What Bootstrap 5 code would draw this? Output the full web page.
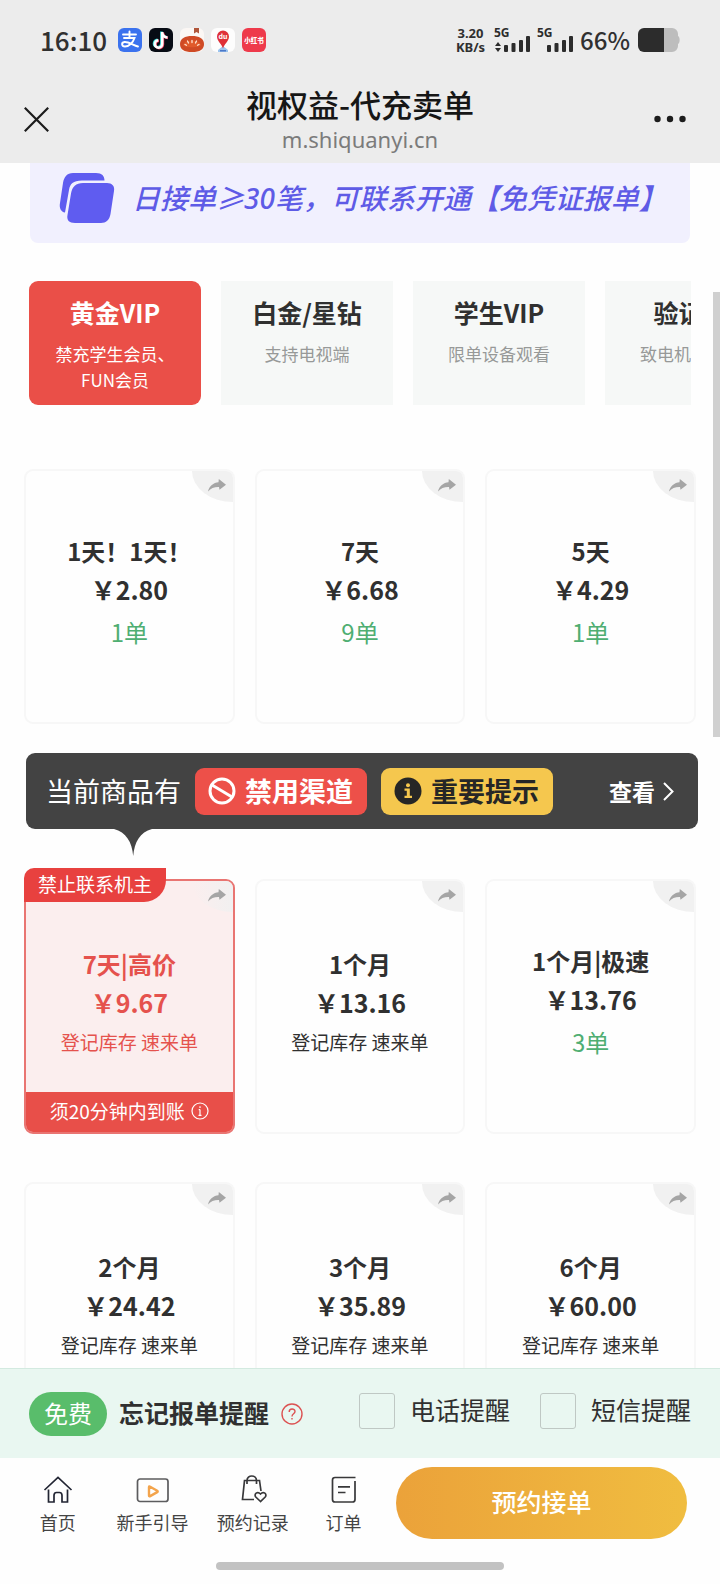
<!DOCTYPE html>
<html lang="zh-CN">
<head>
<meta charset="utf-8">
<meta name="viewport" content="width=device-width, initial-scale=1">
<title>视权益-代充卖单</title>
<link href="https://cdn.jsdelivr.net/npm/bootstrap@5.3.0/dist/css/bootstrap.min.css" rel="stylesheet">
<style>
  :root { --ink: #303030; --brand-red: #ea4f48; --ok: #4fae72; }
  body { font-family: "Noto Sans CJK SC", sans-serif; color: var(--ink); background: #fefefe; }
  button { color: inherit; }
  a { color: inherit; text-decoration: none; }
  svg { flex: none; display: block; }

  .topbar { background: #ececec; }
  .status { height: 80px; padding: 0 40px; }
  .clock { font-size: 26px; font-weight: 500; line-height: 32px; }
  .apps { gap: 7px; margin-left: 11px; }
  .speed { font-family: "Noto Sans", sans-serif; font-size: 13px; font-weight: 700; line-height: 14px; }
  .net { font-family: "Noto Sans", sans-serif; }
  .charge { font-size: 24px; font-weight: 500; line-height: 32px; margin-left: 5px; }
  .titlebar { height: 83px; padding: 0 24px 5px; }
  .page-name { font-size: 31px; font-weight: 500; line-height: 40px; color: #161616; }
  .page-host { font-family: "Noto Sans", sans-serif; font-size: 22px; line-height: 30px; color: #7b7b7b; }

  .feed { overflow-y: auto; overflow-x: hidden; scrollbar-width: none; min-height: 0; }
  .feed::-webkit-scrollbar { display: none; }
  .thumb { position: absolute; right: 0; top: 129px; width: 7px; height: 445px; background: #d0d0d0; }

  .promo { height: 80px; margin: 0 30px; padding: 0 28px 11px; gap: 17px; background: #f1f0fe; border-radius: 0 0 8px 8px; }
  .promo-text { font-family: "Noto Sans", "Noto Sans CJK SC", sans-serif; font-size: 28px; font-weight: 500; font-style: italic; line-height: 36px; color: #5e5be6; white-space: nowrap; }

  .kinds { margin: 38px 29px 0; gap: 20px; overflow: hidden; }
  .kind { flex: 0 0 172px; height: 124px; padding: 12px 24px 0; border: 0; background: #f6f8f7; }
  .kind-name { font-size: 25px; font-weight: 700; line-height: 38px; white-space: nowrap; }
  .kind-note { font-size: 17px; line-height: 26px; color: #979998; margin-top: 10px; }
  .kind.active { background: var(--brand-red); border-radius: 9px; color: #fff; }
  .kind.active .kind-note { color: #fff; }

  .goods { display: grid; grid-template-columns: repeat(3, 1fr); gap: 20px; padding: 0 24px; }
  .good { position: relative; height: 255px; padding-bottom: 9px; border: 2px solid #f7f7f7; border-radius: 9px; background: #fefefe; }
  .good-name { font-size: 24px; font-weight: 700; line-height: 39px; }
  .good-price { font-size: 25px; font-weight: 700; line-height: 39px; }
  .good-count { font-size: 24px; line-height: 45px; color: var(--ok); }
  .good-stock { font-size: 19px; line-height: 39px; }
  .share { position: absolute; top: 0; right: 0; width: 41px; height: 31px; padding: 8px 7px 0 16px; border: 0; background: #f1f1f1; border-radius: 0 7px 0 41px / 0 7px 0 31px; }
  .good.picked { border-color: #e97572; background: #fbeeee; color: #e5524d; }
  .picked .share { background: linear-gradient(90deg, #fbeeee, #f1f0f0); }
  .tag { position: absolute; left: -2px; top: -13px; height: 34px; padding: 0 14px; font-size: 19px; line-height: 32px; color: #fff; background: #e8413f; border-radius: 10px 0 22px 0; }
  .limit { position: absolute; left: 0; right: 0; bottom: 0; height: 40px; padding-bottom: 2px; gap: 6px; font-size: 19px; color: #fff; background: #e84f49; border-radius: 0 0 7px 7px; }

  .notice { position: relative; height: 76px; margin: 29px 22px 50px 26px; padding: 0 24px 0 20px; background: #434343; border-radius: 9px; color: #fff; }
  .notice-lead { font-size: 27px; line-height: 40px; white-space: nowrap; }
  .chip { height: 47px; gap: 9px; padding: 0 14px 0 13px; border-radius: 9px; font-size: 27px; font-weight: 700; line-height: 40px; white-space: nowrap; margin-left: 14px; }
  .chip-red { background: #ed5049; }
  .chip-gold { background: #f5c74e; color: #262626; }
  .look { font-size: 23px; font-weight: 700; gap: 8px; }
  .notice-tip { position: absolute; left: 88px; top: 75px; }

  .remind { height: 90px; padding: 0 29px; background: #e9f7f1; border-top: 1px solid #d3eae0; }
  .free { height: 44px; padding: 0 15px; border-radius: 22px; font-size: 24px; line-height: 41px; color: #fff; background: #59bd6b; }
  .remind-name { font-size: 25px; font-weight: 700; line-height: 38px; margin-left: 12px; padding-bottom: 4px; }
  .pick-row { gap: 30px; padding-bottom: 6px; }
  .pick { gap: 15px; font-size: 25px; line-height: 34px; white-space: nowrap; }
  .pick span { padding-bottom: 4px; }
  .pick input { appearance: none; width: 36px; height: 36px; margin: 0; border: 1px solid #bfc8c4; border-radius: 3px; background: transparent; }
  .pick input:checked { background: #59bd6b; }

  .tabs { height: 98px; padding: 9px 33px 0 11px; }
  .tab-list { display: grid; grid-template-columns: 94fr 96fr 105fr 77fr; }
  .tab-link { font-size: 18px; line-height: 26px; color: #444; gap: 2px; padding-top: 4px; white-space: nowrap; }
  .book { flex: 0 0 291px; height: 72px; margin-left: 14px; padding-bottom: 3px; border: 0; border-radius: 36px; font-size: 25px; font-weight: 500; color: #fff; background: linear-gradient(90deg, #eba23a, #f0bd40); }
  .home-pill { width: 40%; height: 8px; border-radius: 4px; background: #c2c2c2; margin: 6px auto 14px; }
</style>
</head>
<body>
<svg width="0" height="0" class="position-absolute" aria-hidden="true">
  <symbol id="share" viewBox="0 0 18 13"><path d="M0 12.500C1.200 7 5.500 3.700 10.500 3.300L10.800 0 18 5.800 11.500 10.800 11 8C6.500 7.800 3 9.200 0 12.500Z" fill="#a5a5a5"/></symbol>
</svg>

<div class="vh-100 d-flex flex-column">
  <header class="topbar">
    <div class="status d-flex align-items-center">
      <span class="clock">16:10</span>
      <div class="apps d-flex">
        <svg width="24" height="24" viewBox="0 0 24 24"><rect width="24" height="24" rx="6" fill="#3b72ee"/><g fill="none" stroke="#fff" stroke-width="1.900" stroke-linecap="round"><path d="M5 6.500H18M11.500 3.500V10M6 10H16.500C15 14.500 11 18.500 7 18.500 3.500 18.500 3 14.500 6.500 14 10 13.500 15 17 20 18.500"/></g></svg>
        <svg width="24" height="24" viewBox="0 0 24 24"><rect width="24" height="24" rx="6" fill="#070b14"/><g fill="none" stroke-width="2.600"><path d="M12.400 3.500V15.500A3.700 3.700 0 1 1 8.500 11.800M12.400 4.500C13 7.500 15 9 18 9.200" stroke="#35d6d6"/><path d="M13.900 4.500V16.500A3.700 3.700 0 1 1 10 12.800M14 5.500C14.500 8 16.500 9.700 19 9.900" stroke="#ee3a5c"/><path d="M13.200 4V16A3.700 3.700 0 1 1 9.300 12.300M13.200 5C13.800 7.800 15.700 9.300 18.500 9.500" stroke="#fff"/></g></svg>
        <svg width="24" height="24" viewBox="0 0 24 24"><rect width="24" height="24" rx="6" fill="#fbf7f4"/><path d="M14 0h5v5.500l-2.500-1.500L14 5.500Z" fill="#b0563a"/><path d="M0 16C0 10.500 5 8 12 8s12 2.500 12 8-4 8-12 8S0 21.500 0 16Z" fill="#cf4a25"/><path d="M3 17c2-3.500 5-4.500 9-4.500s7 1 9 4.500c-2 3-16 3-18 0Z" fill="#e05a2b"/><g stroke="#ffe9d8" stroke-width="1.300" stroke-linecap="round"><path d="M12 12.500v2M7.500 13l1 2M16.500 13l-1 2M5 16.500l1.500.8M19 16.500l-1.500.8"/></g></svg>
        <svg width="24" height="24" viewBox="0 0 24 24"><rect width="24" height="24" rx="6" fill="#fdfdfd"/><path d="M7 22l5-4 5 4v2H7Z" fill="#9cc4ef"/><path d="M9 22h6v1.500H9Z" fill="#4c79c8"/><path d="M12 20.500C11 16 6 13.500 6 8.500a6 6 0 0 1 12 0c0 5-5 7.500-6 12Z" fill="#df3038"/><text x="12" y="11" text-anchor="middle" font-size="7" font-weight="700" fill="#fff">du</text></svg>
        <svg width="24" height="24" viewBox="0 0 24 24"><rect width="24" height="24" rx="6" fill="#ee3a4b"/><text x="12" y="14.500" text-anchor="middle" font-size="6.500" font-weight="900" fill="#fff">小红书</text></svg>
      </div>
      <div class="d-flex align-items-center ms-auto">
        <span class="speed text-center">3.20<br>KB/s</span>
        <svg class="net ms-2" width="38" height="34" viewBox="0 -4 38 34" fill="#2c2c2c"><text x="1" y="10" font-size="12" font-weight="700">5G</text><path d="M5 15l3 4H2zM5 25l-3-4h6z"/><rect x="11" y="18" width="4" height="7" rx="1"/><rect x="18.500" y="16" width="4" height="9" rx="1"/><rect x="26" y="13" width="4" height="12" rx="1"/><rect x="33" y="9" width="4" height="16" rx="1"/></svg>
        <svg class="net ms-1" width="40" height="34" viewBox="0 -4 40 34" fill="#2c2c2c"><text x="2" y="10" font-size="12" font-weight="700">5G</text><rect x="12" y="18" width="4" height="7" rx="1"/><rect x="19.500" y="16" width="4" height="9" rx="1"/><rect x="27" y="13" width="4" height="12" rx="1"/><rect x="34" y="9" width="4" height="16" rx="1"/></svg>
        <span class="charge">66%</span>
        <svg class="ms-2" width="42" height="24" viewBox="0 0 42 24"><path d="M26 0h8a6 6 0 0 1 6 6v2c2.200 1 2.200 7 0 8v2a6 6 0 0 1-6 6H26Z" fill="#bdbdbd"/><path d="M6 0h20v24H6a6 6 0 0 1-6-6V6a6 6 0 0 1 6-6Z" fill="#2c2c2c"/></svg>
      </div>
    </div>
    <div class="titlebar d-flex justify-content-between">
      <button type="button" class="btn p-0 border-0" aria-label="关闭">
        <svg width="42" height="25" viewBox="0 0 42 25" stroke="#1c1c1c" stroke-width="2.200"><path d="M.8.8l23.400 23.400M24.200.8L.8 24.200"/></svg>
      </button>
      <div class="text-center pt-1">
        <h1 class="page-name m-0">视权益-代充卖单</h1>
        <div class="page-host">m.shiquanyi.cn</div>
      </div>
      <button type="button" class="btn p-0 border-0" aria-label="更多">
        <svg width="42" height="8" viewBox="0 0 42 8" fill="#1c1c1c"><circle cx="3.500" cy="4" r="3.200"/><circle cx="16" cy="4" r="3.200"/><circle cx="28.500" cy="4" r="3.200"/></svg>
      </button>
    </div>
  </header>

  <div class="position-relative flex-grow-1 d-flex flex-column" style="min-height:0">
    <main class="feed flex-grow-1">
      <div class="promo d-flex align-items-center">
        <svg width="57" height="52" viewBox="0 0 57 52" fill="#5f5cf0"><path d="M15 1H38C44 1 46.500 4 46.500 8.500H24C15 8.500 12 12 11 18L7 40.500C3 40 1 36 2 31L5 11C6 5 9 1 15 1Z"/><path d="M25 11H49C54 11 57 14 56 19L52.500 42C51.500 48 48 51 43 51H17C11 51 8.500 48 9.500 43L13 21.500C14 15 18 11 25 11Z"/></svg>
        <span class="promo-text">日接单≥30笔，可联系开通【免凭证报单】</span>
      </div>

      <div class="kinds d-flex">
        <button type="button" class="kind active d-flex flex-column align-items-center"><div class="kind-name">黄金VIP</div><div class="kind-note">禁充学生会员、FUN会员</div></button>
        <button type="button" class="kind d-flex flex-column align-items-center"><div class="kind-name">白金/星钻</div><div class="kind-note">支持电视端</div></button>
        <button type="button" class="kind d-flex flex-column align-items-center"><div class="kind-name">学生VIP</div><div class="kind-note">限单设备观看</div></button>
        <button type="button" class="kind d-flex flex-column align-items-center"><div class="kind-name">验证码</div><div class="kind-note">致电机主验证</div></button>
      </div>

      <section class="goods" style="margin-top:64px">
        <article class="good d-flex flex-column justify-content-center text-center">
          <button type="button" class="share d-flex align-items-start" aria-label="分享"><svg width="18" height="13"><use href="#share"/></svg></button>
          <div class="good-name">1天！1天！</div><div class="good-price">￥2.80</div><div class="good-count">1单</div>
        </article>
        <article class="good d-flex flex-column justify-content-center text-center">
          <button type="button" class="share d-flex align-items-start" aria-label="分享"><svg width="18" height="13"><use href="#share"/></svg></button>
          <div class="good-name">7天</div><div class="good-price">￥6.68</div><div class="good-count">9单</div>
        </article>
        <article class="good d-flex flex-column justify-content-center text-center">
          <button type="button" class="share d-flex align-items-start" aria-label="分享"><svg width="18" height="13"><use href="#share"/></svg></button>
          <div class="good-name">5天</div><div class="good-price">￥4.29</div><div class="good-count">1单</div>
        </article>
      </section>

      <div class="notice d-flex align-items-center">
        <span class="notice-lead">当前商品有</span>
        <span class="chip chip-red d-flex align-items-center">
          <svg width="28" height="28" viewBox="0 0 28 28" fill="none" stroke="#fff" stroke-width="3"><circle cx="14" cy="14" r="12"/><path d="M4 8L24 20"/></svg>禁用渠道
        </span>
        <span class="chip chip-gold d-flex align-items-center">
          <svg width="28" height="28" viewBox="0 0 28 28"><circle cx="14" cy="14" r="13.500" fill="#262626"/><circle cx="14" cy="8.300" r="2" fill="#f5c74e"/><path d="M10.500 11.500h5.300v7.300H18v2.200h-7.500v-2.200h2.300v-5.100h-2.300Z" fill="#f5c74e"/></svg>重要提示
        </span>
        <a href="#" class="look d-flex align-items-center ms-auto">查看
          <svg width="11" height="19" viewBox="0 0 11 19" fill="none" stroke="#fff" stroke-width="2"><path d="M1 1l8.500 8.500L1 18"/></svg>
        </a>
        <svg class="notice-tip" width="38" height="28" viewBox="0 0 38 28"><path d="M0 0H38V1C26 4 20.500 14 19.200 28 18 14 12 4 0 1Z" fill="#434343"/></svg>
      </div>

      <section class="goods">
        <article class="good picked d-flex flex-column justify-content-center text-center">
          <button type="button" class="share d-flex align-items-start" aria-label="分享"><svg width="18" height="13"><use href="#share"/></svg></button>
          <div class="tag">禁止联系机主</div>
          <div class="good-name">7天|高价</div><div class="good-price">￥9.67</div><div class="good-stock">登记库存 速来单</div>
          <div class="limit d-flex align-items-center justify-content-center">须20分钟内到账
            <svg width="18" height="18" viewBox="0 0 18 18" fill="none" stroke="#fff" stroke-width="1.200"><circle cx="9" cy="9" r="8"/><path d="M9 7.500V13.500M9 4.300V6M7.500 13.400h3M7.700 7.700H9"/></svg>
          </div>
        </article>
        <article class="good d-flex flex-column justify-content-center text-center">
          <button type="button" class="share d-flex align-items-start" aria-label="分享"><svg width="18" height="13"><use href="#share"/></svg></button>
          <div class="good-name">1个月</div><div class="good-price">￥13.16</div><div class="good-stock">登记库存 速来单</div>
        </article>
        <article class="good d-flex flex-column justify-content-center text-center">
          <button type="button" class="share d-flex align-items-start" aria-label="分享"><svg width="18" height="13"><use href="#share"/></svg></button>
          <div class="good-name">1个月|极速</div><div class="good-price">￥13.76</div><div class="good-count">3单</div>
        </article>
      </section>

      <section class="goods" style="margin-top:48px">
        <article class="good d-flex flex-column justify-content-center text-center">
          <button type="button" class="share d-flex align-items-start" aria-label="分享"><svg width="18" height="13"><use href="#share"/></svg></button>
          <div class="good-name">2个月</div><div class="good-price">￥24.42</div><div class="good-stock">登记库存 速来单</div>
        </article>
        <article class="good d-flex flex-column justify-content-center text-center">
          <button type="button" class="share d-flex align-items-start" aria-label="分享"><svg width="18" height="13"><use href="#share"/></svg></button>
          <div class="good-name">3个月</div><div class="good-price">￥35.89</div><div class="good-stock">登记库存 速来单</div>
        </article>
        <article class="good d-flex flex-column justify-content-center text-center">
          <button type="button" class="share d-flex align-items-start" aria-label="分享"><svg width="18" height="13"><use href="#share"/></svg></button>
          <div class="good-name">6个月</div><div class="good-price">￥60.00</div><div class="good-stock">登记库存 速来单</div>
        </article>
      </section>
    </main>
    <div class="thumb"></div>
  </div>

  <div class="remind d-flex align-items-center flex-shrink-0">
    <span class="free">免费</span>
    <span class="remind-name">忘记报单提醒</span>
    <a href="#" class="ms-2 ps-1" aria-label="说明">
      <svg width="22" height="22" viewBox="0 0 22 22" fill="none" stroke="#dc5252" stroke-width="1.400"><circle cx="11" cy="11" r="10"/><path d="M8.200 9c0-4 5.800-3.800 5.800-.5 0 2.300-3 2.300-3 5M11 15v1.600"/></svg>
    </a>
    <div class="pick-row d-flex ms-auto">
      <label class="pick d-flex align-items-center"><input type="checkbox"><span>电话提醒</span></label>
      <label class="pick d-flex align-items-center"><input type="checkbox"><span>短信提醒</span></label>
    </div>
  </div>

  <footer class="flex-shrink-0">
    <div class="tabs d-flex align-items-start">
      <nav class="tab-list flex-grow-1">
        <a href="#" class="tab-link d-flex flex-column align-items-center">
          <svg width="36" height="36" viewBox="0 0 36 36" fill="none" stroke="#222533" stroke-width="1.700"><path d="M4.500 19L18 6.500 31.500 19M8.500 18.500V31H14V24.500c0-2 1-3 2.500-3h3c1.500 0 2.500 1 2.500 3V31h5.500V18.500"/></svg>首页</a>
        <a href="#" class="tab-link d-flex flex-column align-items-center">
          <svg width="36" height="36" viewBox="0 0 36 36" fill="none"><rect x="2.500" y="8" width="30.500" height="22.500" rx="2.500" stroke="#5c5c5e" stroke-width="1.700"/><path d="M14 16v8.500c0 .8.500 1 1.200.6l7-4c.7-.4.700-1 0-1.400l-7-4c-.7-.4-1.200-.2-1.200.3Z" stroke="#f3a44c" stroke-width="2.400"/></svg>新手引导</a>
        <a href="#" class="tab-link d-flex flex-column align-items-center">
          <svg width="36" height="36" viewBox="0 0 36 36" fill="none" stroke="#38383a" stroke-width="1.700"><path d="M19 28.500H7.500L9.500 9.500H24.500L26 20M12 13V9.500C12 3.500 21.500 3.500 21.500 9.500V13M25.500 30.500L20.800 26C18.500 23 22.500 19.800 25.500 23 28.500 19.800 32.500 23 30.200 26Z"/></svg>预约记录</a>
        <a href="#" class="tab-link d-flex flex-column align-items-center">
          <svg width="36" height="36" viewBox="0 0 36 36" fill="none" stroke="#38383a" stroke-width="1.700"><path d="M29.500 6.500H9Q6.500 6.500 6.500 9V28.500Q6.500 31 9 31H26.500Q29 31 29 28.500V10M12 15.800H24M12 21.500H19.500"/></svg>订单</a>
      </nav>
      <button type="button" class="book">预约接单</button>
    </div>
    <div class="home-pill"></div>
  </footer>
</div>
<script src="https://cdn.jsdelivr.net/npm/bootstrap@5.3.0/dist/js/bootstrap.bundle.min.js"></script>
</body>
</html>
